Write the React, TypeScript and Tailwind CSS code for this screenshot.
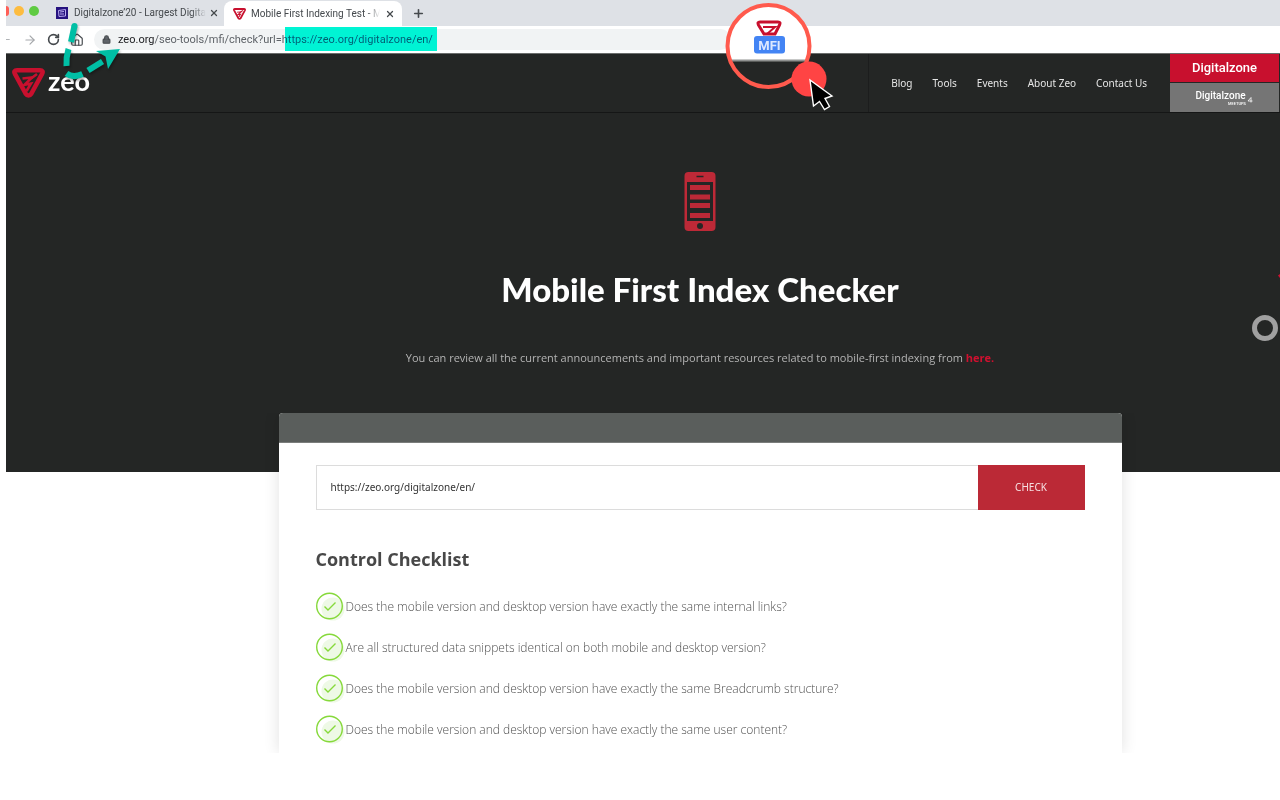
import { ArrowLeft, ArrowRight, House, Lock, Plus, RotateCw, X } from 'lucide-react';

const navLinks = ['Blog', 'Tools', 'Events', 'About Zeo', 'Contact Us'];

const checklist = [
    'Does the mobile version and desktop version have exactly the same internal links?',
    'Are all structured data snippets identical on both mobile and desktop version?',
    'Does the mobile version and desktop version have exactly the same Breadcrumb structure?',
    'Does the mobile version and desktop version have exactly the same user content?',
];

function ZeoMark({ className }: { className?: string }) {
    return (
        <svg viewBox="0 0 33 30" className={className} aria-hidden="true">
            <path
                d="M5 2.3H28Q31.800 2.300 30.200 5.600L19.400 25.600Q16.500 29.600 13.600 25.600L2.800 5.600Q1.200 2.300 5 2.300Z"
                fill="none"
                stroke="#c8102e"
                strokeWidth="4.500"
            />
            <path d="M10.500 10.500L20 9.500L12.500 16.800L19 15.500L14.500 23" fill="none" stroke="#c8102e" strokeWidth="2.600" />
            <path d="M19 10.500L25 6" stroke="#c8102e" strokeWidth="2.600" />
        </svg>
    );
}

function BrowserChrome() {
    return (
        <div className="font-[Roboto,sans-serif] text-[#45494d]">
            <div className="flex h-[26px] items-end bg-[#dee1e6]">
                <div className="flex h-[26px] w-[38px] shrink-0 items-start pt-[6px]">
                    <span className="h-[10px] w-[3px] rounded-r-full bg-[#ff5f57]" />
                    <span className="ml-[5px] size-[10px] rounded-full bg-[#fdbc40]" />
                    <span className="ml-[5px] size-[10px] rounded-full bg-[#5fcb43]" />
                </div>
                <div className="flex h-[26px] w-[180px] shrink-0 items-center pl-[12px]">
                    <svg viewBox="0 0 12 12" className="size-[12px] shrink-0" aria-hidden="true">
                        <rect width="12" height="12" fill="#26127f" />
                        <path d="M2.500 3.500L9.500 2.500V9L3 9.500ZM4 5L8 4.500M4 7H8" fill="none" stroke="#b9aaf0" />
                    </svg>
                    <span className="ml-[6px] w-[132px] text-[10px] leading-[14px] whitespace-nowrap [mask-image:linear-gradient(90deg,#000_118px,transparent)]">
                        Digitalzone’20 - Largest Digita
                    </span>
                    <button type="button" aria-label="Close tab" className="ml-[3px]">
                        <X className="size-[10px]" strokeWidth={3} />
                    </button>
                </div>
                <div className="flex h-[25px] w-[178px] shrink-0 items-center rounded-t-[8px] bg-white pl-[9px]">
                    <ZeoMark className="h-[12px] w-[13px] shrink-0" />
                    <span className="ml-[5px] w-[129px] text-[10px] leading-[14px] whitespace-nowrap [mask-image:linear-gradient(90deg,#000_116px,transparent)]">
                        Mobile First Indexing Test - MF
                    </span>
                    <button type="button" aria-label="Close tab" className="ml-[5px]">
                        <X className="size-[10px]" strokeWidth={3} />
                    </button>
                </div>
                <button type="button" aria-label="New tab" className="mb-[6px] ml-[10px]">
                    <Plus className="size-[13px]" strokeWidth={3} />
                </button>
            </div>
            <div className="flex h-[27px] items-center bg-white">
                <button type="button" aria-label="Back" className="flex w-[6px] justify-end overflow-hidden text-[#b0b3b6]">
                    <ArrowLeft className="size-[13px] shrink-0" />
                </button>
                <button type="button" aria-label="Forward" className="ml-[11px] text-[#a5a8ab]">
                    <ArrowRight className="size-[14px]" />
                </button>
                <button type="button" aria-label="Reload" className="ml-[10px]">
                    <RotateCw className="size-[13px]" strokeWidth={3} />
                </button>
                <button type="button" aria-label="Home" className="ml-[10px]">
                    <House className="size-[14px]" />
                </button>
                <div className="ml-[10px] flex h-[21px] w-1/2 items-center rounded-full bg-[#f1f3f4] pl-[8px] text-[11px] leading-[16px]">
                    <Lock className="size-[9px] shrink-0 fill-[#5f6368]" strokeWidth={3} />
                    <label htmlFor="address" className="ml-[7px] text-[#202124]">
                        zeo.org
                    </label>
                    <input
                        id="address"
                        type="text"
                        defaultValue="/seo-tools/mfi/check?url=https://zeo.org/digitalzone/en/"
                        className="min-w-0 flex-1 bg-transparent text-[#5f6368] outline-none"
                    />
                </div>
            </div>
        </div>
    );
}

function SiteHeader() {
    return (
        <header className="flex h-[60px] border-t border-b border-t-[#6b6d6c] border-b-[#151616] bg-[#242625]">
            <a href="#" className="flex items-center pl-[6px] font-[Lato,sans-serif] text-[27px] leading-[30px] font-bold text-white">
                <ZeoMark className="mr-[3px] h-[30px] w-[33px]" />
                <span className="pb-[4px]">zeo</span>
            </a>
            <nav className="ml-auto flex items-center gap-[20px] border-l border-[#1c1d1d] pr-[23px] pl-[22px] font-['Noto_Sans',sans-serif] text-[10px] leading-[16px] text-[#e6e6e6]">
                {navLinks.map((link) => (
                    <a key={link} href="#">
                        {link}
                    </a>
                ))}
            </nav>
            <div className="mr-px flex w-[109px] flex-col gap-px text-center font-[Roboto,sans-serif] text-white">
                <a href="#" className="flex h-[28px] items-center justify-center bg-[#c8102e] text-[13px] font-medium">
                    Digitalzone
                </a>
                <a href="#" className="relative flex flex-1 items-center justify-center bg-[#757575] pr-[8px] pb-[4px] text-[10px] font-medium">
                    Digitalzone
                    <span className="absolute right-[33px] bottom-[6px] text-[4px] leading-[5px]">MEETUPS</span>
                    <svg viewBox="0 0 6 6" className="absolute right-[26px] bottom-[9px] size-[6px]" aria-hidden="true">
                        <path d="M4 .5L1 4H5.500M4 .5V5.500" fill="none" stroke="white" strokeWidth="0.800" />
                    </svg>
                </a>
            </div>
        </header>
    );
}

function Hero() {
    return (
        <section className="flex h-[359px] flex-col items-center bg-[#242625] pt-[59px] pl-[114px]">
            <svg viewBox="0 0 32 60" className="h-[60px] w-[32px]" aria-hidden="true">
                <rect x="0.500" width="31" height="59" rx="4" fill="#bd2937" />
                <path d="M3 10H29V49H3Z" fill="#242625" />
                <path d="M12.500 4.500H19.500" stroke="#242625" strokeWidth="1.500" />
                <circle cx="16" cy="54" r="3" fill="#242625" />
                <path d="M6 15.500H26M6 25H26M6 33.500H26M6 43.500H26" stroke="#bd2937" strokeWidth="5" />
            </svg>
            <h1 className="mt-[37px] font-[Lato,sans-serif] text-[33px] leading-[40px] font-black whitespace-nowrap text-white">
                Mobile First Index Checker
            </h1>
            <p className="mt-[41px] text-[11px] leading-[16px] whitespace-nowrap text-[#b4b4b4]">
                You can review all the current announcements and important resources related to mobile-first indexing from{' '}
                <a href="#" className="font-bold text-[#d0102f]">
                    here.
                </a>
            </p>
        </section>
    );
}

function CheckIcon() {
    return (
        <svg viewBox="0 0 30 30" className="size-[30px] shrink-0" aria-hidden="true">
            <circle cx="17" cy="17" r="11.500" fill="#eef9e6" />
            <circle cx="13.500" cy="14" r="12.800" fill="none" stroke="#86d93b" strokeWidth="1.400" />
            <path d="M8.500 14.500L12 18L19.500 10.500" fill="none" stroke="#86d93b" strokeWidth="1.400" />
        </svg>
    );
}

function CheckerCard() {
    return (
        <div className="-mt-[59px] overflow-hidden pl-[114px]">
            <main className="mx-auto h-[340px] w-[843px] rounded-t-[4px] bg-white shadow-[0_0_16px_rgba(0,0,0,0.12)]">
                <div className="h-[30px] rounded-t-[4px] border-b border-[#7b7d7c] bg-[#5a5e5c]" />
                <div className="px-[37px] pt-[22px]">
                    <form className="flex h-[45px] font-['Noto_Sans',sans-serif]">
                        <input
                            type="text"
                            aria-label="Page URL"
                            defaultValue="https://zeo.org/digitalzone/en/"
                            className="min-w-0 flex-1 border border-r-0 border-[#dcdcdc] px-[14px] text-[10px] text-[#333] outline-none"
                        />
                        <button type="button" className="w-[107px] bg-[#bb2936] text-[10px] text-[#f6dfe1]">
                            CHECK
                        </button>
                    </form>
                    <h2 className="mt-[36px] text-[18px] leading-[26px] font-bold text-[#484848]">Control Checklist</h2>
                    <ul className="mt-[20px] flex flex-col gap-[11px]">
                        {checklist.map((item) => (
                            <li key={item} className="flex items-center text-[12px] leading-[18px] font-light text-[#505050]">
                                <CheckIcon />
                                {item}
                            </li>
                        ))}
                    </ul>
                </div>
            </main>
        </div>
    );
}

function Annotations() {
    return (
        <>
            <div className="pointer-events-none absolute top-[27px] left-[285px] h-[24px] w-[152px] bg-[#00f5d4] mix-blend-darken" />
            <svg viewBox="0 0 70 70" className="pointer-events-none absolute top-[20px] left-[56px] size-[70px] drop-shadow-[1px_2px_1px_rgba(0,0,0,0.3)]" aria-hidden="true">
                <g fill="none" stroke="#00bfa5" strokeWidth="6">
                    <path d="M18.500 6L15 22" />
                    <path d="M12.500 29Q10 37 10.500 46" />
                    <path d="M10.500 53.500Q17 58.500 26.500 54" />
                    <path d="M32 50.500L46.500 41.500" />
                </g>
                <circle cx="18.500" cy="6" r="3" fill="#00bfa5" />
                <path d="M64 29L40 31L49.500 36.500L52 49Z" fill="#00bfa5" />
            </svg>
            <svg viewBox="0 0 112 112" className="pointer-events-none absolute top-0 left-[722px] size-[112px]" aria-hidden="true">
                <clipPath id="lens">
                    <circle cx="46.500" cy="46" r="41" />
                </clipPath>
                <g clipPath="url(#lens)">
                    <rect width="112" height="61" fill="white" />
                    <rect y="61" width="112" height="51" fill="#242625" />
                    <rect y="59.500" width="112" height="2" fill="#8f9190" />
                    <g className="blur-[0.500px]">
                        <path d="M38 22H56Q59 22 57.500 25L53 34H42L36.500 25Q35 22 38 22Z" fill="white" stroke="#c8102e" strokeWidth="3" />
                        <path d="M41 27H53L45 34" fill="none" stroke="#c8102e" strokeWidth="2" />
                        <rect x="32" y="36" width="31" height="17.500" rx="3" fill="#4384f4" />
                        <text x="47.500" y="49.500" textAnchor="middle" fontFamily="Roboto, sans-serif" fontSize="13" fontWeight="700" fill="#dce8ff">
                            MFI
                        </text>
                    </g>
                </g>
                <circle cx="46.500" cy="46" r="41" fill="none" stroke="#ff5a4d" strokeWidth="4" />
                <circle cx="87" cy="79" r="17.500" fill="#ff4444" />
                <path d="M88 80L91.500 106L97.500 101.500L102.500 109.500L107.500 106.500L103 98.500L110 96Z" fill="black" stroke="white" strokeWidth="1.400" />
            </svg>
            <div className="pointer-events-none absolute top-[315px] right-[2px] size-[26px] rounded-full border-[5px] border-[#a0a0a0]" />
            <svg viewBox="0 0 2 4" className="pointer-events-none absolute top-[274px] right-0 h-[4px] w-[2px]" aria-hidden="true">
                <path d="M0 1.500L2 0V4Z" fill="#d0102f" />
            </svg>
        </>
    );
}

export default function App() {
    return (
        <div className="relative min-h-screen overflow-hidden bg-white pl-[6px] font-['Open_Sans','Noto_Sans',sans-serif]">
            <BrowserChrome />
            <SiteHeader />
            <Hero />
            <CheckerCard />
            <Annotations />
        </div>
    );
}
